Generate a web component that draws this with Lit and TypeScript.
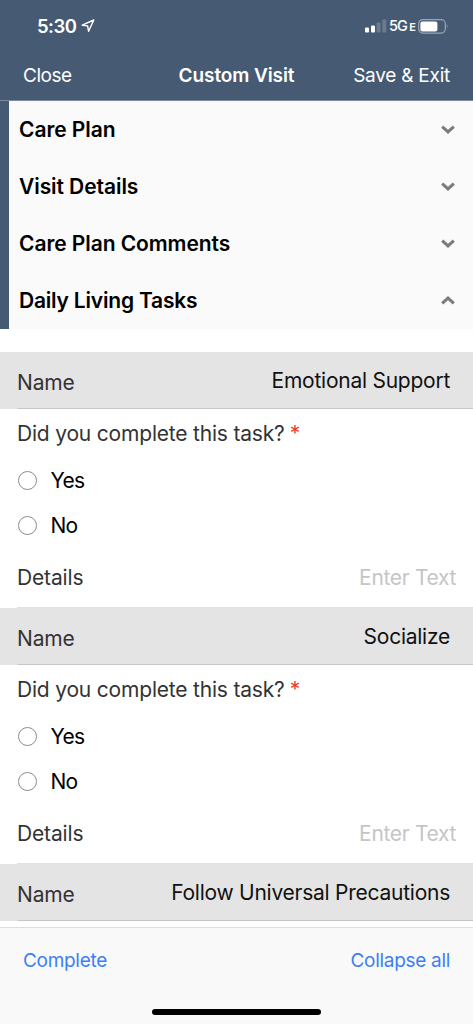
import { LitElement, html, css, svg } from "lit";
import { customElement, property } from "lit/decorators.js";

const chevron = (open: boolean) => html`<svg width="16" height="12" viewBox="0 0 16 12">
  <path d=${open ? "M2.2 8.4 L8 3.1 L13.8 8.4" : "M2.2 2.7 L8 8 L13.8 2.7"} fill="none" stroke="#7c7c7c" stroke-width="3.1"/>
</svg>`;

@customElement("status-bar")
class StatusBar extends LitElement {
  static styles = css`
    :host { display: flex; height: 52px; box-sizing: border-box; padding: 0 24px 0 37px; justify-content: space-between; color: #fff; }
    .left, .right { display: flex; align-items: center; height: 52px; }
    .time { font-size: 18.5px; font-weight: 600; letter-spacing: -0.55px; line-height: 52px; }
    .arrow { margin-left: 5px; }
    .signal { flex: none; }
    .net { width: 28px; font-size: 14.5px; font-weight: 500; letter-spacing: -1px; line-height: 54px; margin-left: 2px; display: flex; align-items: baseline; }
    .e { font-size: 11px; font-weight: 600; margin-left: 2.5px; letter-spacing: 0; }
    .battery { flex: none; margin-left: 1px; }
  `;
  render() {
    return html`
      <div class="left">
        <span class="time">5:30</span>
        <svg class="arrow" width="14" height="14" viewBox="0 0 14 14">
          <path d="M1.2 6.2 L12.8 1 L7.6 12.3 L6.6 6.9 Z" fill="none" stroke="#fff" stroke-width="1.4" stroke-linejoin="round"/>
        </svg>
      </div>
      <div class="right">
        <svg class="signal" width="22" height="14" viewBox="0 0 22 14">
          ${[[0, 5.2, 1], [6, 7.2, 1], [11.6, 10.2, 0.2], [17.3, 13.2, 0.2]].map(
            ([x, h, o]) => svg`<rect x=${x} y=${13.6 - h} width="4" height=${h} rx="1" fill="#fff" fill-opacity=${o}/>`
          )}
        </svg>
        <span class="net">5G<span class="e">E</span></span>
        <svg class="battery" width="31" height="15" viewBox="0 0 31 15">
          <rect x="0.7" y="0.7" width="26.6" height="13.4" rx="4" fill="none" stroke="#fff" stroke-opacity="0.45" stroke-width="1.2"/>
          <rect x="2.4" y="2.4" width="17" height="10" rx="2" fill="#fff"/>
          <path d="M28.8 5 Q30.6 7.4 28.8 9.8 Z" fill="#fff" fill-opacity="0.5"/>
        </svg>
      </div>`;
  }
}

@customElement("task-block")
class TaskBlock extends LitElement {
  @property() name = "";
  @property({ type: Boolean }) headonly = false;
  static styles = css`
    :host { display: block; color: #333; font-size: 21px; }
    .head { display: flex; height: 57px; box-sizing: border-box; background: linear-gradient(#c6c6c8, #c6c6c8) 18px 56px / 100% 1px no-repeat #e4e4e4; padding: 0 23px 0 17px; justify-content: space-between; }
    .name { line-height: 62px; letter-spacing: -0.15px; }
    .value { line-height: 58px; color: #111; letter-spacing: -0.25px; }
    .question { height: 50px; line-height: 50px; padding-left: 17px; letter-spacing: -0.19px; }
    .star { color: #f03a2e; margin-left: 5px; }
    .option { display: flex; align-items: center; height: 44.5px; padding-left: 18px; color: #000; letter-spacing: -0.7px; }
    .radio { width: 19px; height: 19px; box-sizing: border-box; border: 1px solid #8c8c8c; border-radius: 50%; margin-right: 13.5px; background: #fff; }
    .options { margin-top: -0.6px; margin-bottom: 0.6px; }
    .details { display: flex; height: 60px; box-sizing: border-box; justify-content: space-between; padding: 0 17px; line-height: 60px; letter-spacing: -0.15px; background: linear-gradient(#e2e2e2, #e2e2e2) 17px 59px / 100% 1px no-repeat; }
    .hint { color: #c5c5c7; letter-spacing: -0.33px; }
  `;
  render() {
    return html`
      <div class="head"><span class="name">Name</span><span class="value">${this.name}</span></div>
      ${this.headonly ? "" : html`
        <div class="question">Did you complete this task?<span class="star">*</span></div>
        <div class="options">${["Yes", "No"].map((o) => html`<div class="option"><span class="radio"></span>${o}</div>`)}</div>
        <div class="details"><span>Details</span><span class="hint">Enter Text</span></div>`}`;
  }
}

@customElement("app-root")
class AppRoot extends LitElement {
  static styles = css`
    :host { display: flex; flex-direction: column; width: 473px; height: 1024px; overflow: hidden; background: #fff; font-family: Inter, "Liberation Sans", sans-serif; }
    .top { background: #465b73; height: 101px; box-sizing: border-box; border-bottom: 1px solid #7d8b9c; flex: none; color: #fff; }
    .nav { display: grid; grid-template-columns: 1fr auto 1fr; height: 48px; line-height: 48px; padding: 0 23px; font-size: 19px; }
    .close { letter-spacing: -0.45px; }
    .title { font-weight: 600; letter-spacing: -0.1px; }
    .save { text-align: right; letter-spacing: -0.24px; }
    .sections { flex: none; border-left: 9px solid #465b73; background: #fafafa; height: 228px; margin-bottom: 23px; display: grid; grid-template-rows: repeat(4, 1fr); }
    .section { display: flex; align-items: center; justify-content: space-between; padding: 0 17px 0 10px; font-size: 21px; font-weight: 600; letter-spacing: -0.07px; color: #000; }
    .section:last-child { letter-spacing: -0.2px; }
    .tasks { flex: 1; min-height: 0; overflow: hidden; }
    .foot { flex: none; height: 97px; box-sizing: border-box; border-top: 1px solid #dedede; background: #f9f9f9; display: flex; flex-direction: column; align-items: center; color: #3b7ff5; font-size: 19px; }
    .actions { align-self: stretch; display: flex; justify-content: space-between; padding: 0 23px; line-height: 65px; height: 81px; letter-spacing: -0.3px; }
    .home { width: 169px; height: 6px; border-radius: 3px; background: #000; }
  `;
  render() {
    const sections: [string, boolean][] = [["Care Plan", false], ["Visit Details", false], ["Care Plan Comments", false], ["Daily Living Tasks", true]];
    return html`
      <div class="top">
        <status-bar></status-bar>
        <div class="nav"><span class="close">Close</span><span class="title">Custom Visit</span><span class="save">Save &amp; Exit</span></div>
      </div>
      <div class="sections">
        ${sections.map(([t, open]) => html`<div class="section"><span>${t}</span>${chevron(open)}</div>`)}
      </div>
      <div class="tasks">
        <task-block name="Emotional Support"></task-block>
        <task-block name="Socialize"></task-block>
        <task-block name="Follow Universal Precautions" headonly></task-block>
      </div>
      <div class="foot">
        <div class="actions"><span>Complete</span><span>Collapse all</span></div>
        <div class="home"></div>
      </div>`;
  }
}
